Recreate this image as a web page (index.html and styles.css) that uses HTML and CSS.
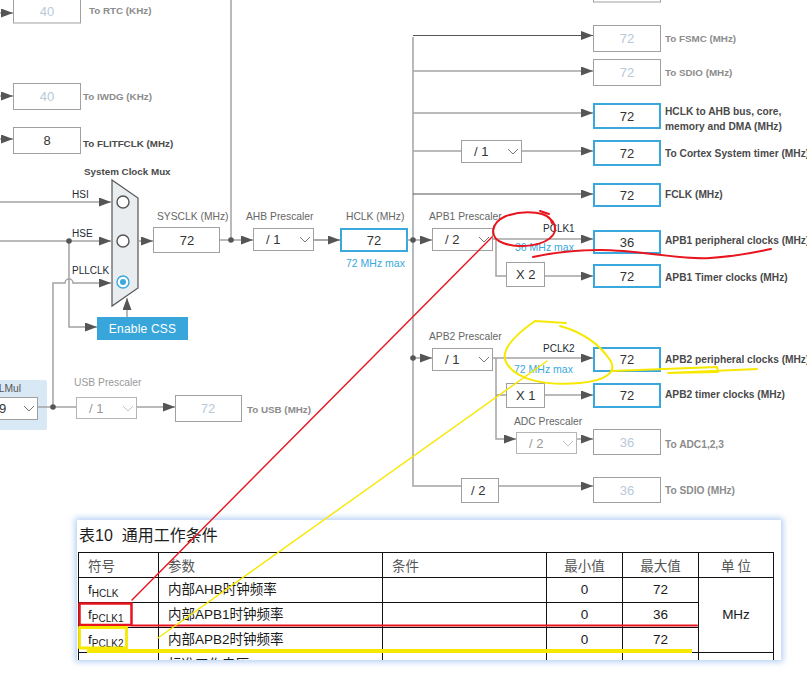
FILE: index.html
```html
<!DOCTYPE html>
<html lang="zh">
<head>
<meta charset="utf-8">
<title>Clock Configuration</title>
<link rel="stylesheet" href="styles.css">
</head>
<body>
<div class="page">
<svg class="diagram" width="807" height="520" viewBox="0 0 807 520">
  <defs>
    <marker id="ah" markerWidth="12" markerHeight="9" refX="12" refY="4.5" orient="auto" markerUnits="userSpaceOnUse">
      <path d="M0,0 L12,4.5 L0,9 Z" fill="#555"/>
    </marker>
  </defs>

  <!-- left top outputs -->
  <path class="w" d="M0,13 H13" marker-end="url(#ah)"/>
  <rect class="bx" x="13.5" y="-5.5" width="67" height="28.5"/>
  <text class="v vd" x="47" y="16">40</text>
  <text class="out outd" x="89" y="14">To RTC (KHz)</text>

  <path class="w" d="M0,96 H13" marker-end="url(#ah)"/>
  <rect class="bx" x="13.5" y="83.5" width="67" height="26"/>
  <text class="v vd" x="47" y="101">40</text>
  <text class="out outd" x="83" y="100">To IWDG (KHz)</text>

  <path class="w" d="M0,139 H13" marker-end="url(#ah)"/>
  <rect class="bx" x="13.5" y="127.5" width="67" height="26"/>
  <text class="v" x="47" y="145">8</text>
  <text class="out" x="83" y="147">To FLITFCLK (MHz)</text>

  <path class="w" d="M231,0 V240"/>

  <!-- system clock mux -->
  <text class="out" x="84" y="175">System Clock Mux</text>
  <path class="w" d="M0,202 H111" marker-end="url(#ah)"/>
  <text class="sig" x="72" y="198">HSI</text>
  <path class="w" d="M0,241 H111" marker-end="url(#ah)"/>
  <text class="sig" x="72" y="237">HSE</text>
  <path class="w" d="M69,241 V327 H97" marker-end="url(#ah)"/>
  <circle class="dot" cx="69" cy="241" r="2.8"/>
  <text class="sig" x="72" y="274">PLLCLK</text>
  <path class="w" d="M53,407 V283 H65 A4,4 0 0 1 73,283 H111" marker-end="url(#ah)"/>
  <polygon class="mux" points="112,180 138,198 138,288 112,306"/>
  <circle class="rb" cx="123" cy="202" r="6"/>
  <circle class="rb" cx="123" cy="241" r="6"/>
  <circle class="rb rbon" cx="123" cy="282" r="6"/>
  <circle class="rbdot" cx="123" cy="282" r="3"/>
  <rect class="css" x="97" y="317" width="91" height="23"/>
  <text class="csst" x="142.5" y="333">Enable CSS</text>
  <path class="w" d="M127,317 V298" marker-end="url(#ah)"/>

  <path class="w" d="M139,241 H153" marker-end="url(#ah)"/>
  <text class="pl" x="157" y="220">SYSCLK (MHz)</text>
  <rect class="bx" x="153.5" y="227.5" width="66" height="25"/>
  <text class="v" x="187" y="245">72</text>

  <path class="w" d="M220,240 H253" marker-end="url(#ah)"/>
  <circle class="dot" cx="231" cy="240" r="2.8"/>
  <text class="pl" x="246" y="220">AHB Prescaler</text>
  <rect class="bx" x="253.5" y="228.5" width="60" height="22"/>
  <text class="sel" x="266" y="244">/ 1</text>
  <polyline class="chev" points="300,237 305,242 310,237"/>
  <path class="wd" d="M314,240 H340" marker-end="url(#ah)"/>
  <text class="pl" x="346" y="220">HCLK (MHz)</text>
  <rect class="bxa" x="341" y="229" width="66" height="22"/>
  <text class="v" x="374" y="245">72</text>
  <text class="max" x="346" y="267">72 MHz max</text>

  <!-- HCLK distribution -->
  <path class="w" d="M413,37 V486 H461"/>
  <path class="w" d="M407,240 H432" marker-end="url(#ah)"/>
  <circle class="dot" cx="413" cy="240" r="2.8"/>

  <rect class="bx" x="593.5" y="-10.5" width="67" height="12.5"/>

  <path class="wd" d="M413,35.5 H593" marker-end="url(#ah)"/>
  <rect class="bx" x="593.5" y="25.5" width="67" height="26"/>
  <text class="v vd" x="627" y="43">72</text>
  <text class="out outd" x="665" y="42">To FSMC (MHz)</text>

  <path class="w" d="M413,71 H593" marker-end="url(#ah)"/>
  <rect class="bx" x="593.5" y="59.5" width="67" height="26"/>
  <text class="v vd" x="627" y="77">72</text>
  <text class="out outd" x="665" y="76">To SDIO (MHz)</text>

  <path class="w" d="M413,113 H593" marker-end="url(#ah)"/>
  <rect class="bxa" x="594" y="104" width="66" height="24"/>
  <text class="v" x="627" y="120.5">72</text>
  <text class="out outr" x="665" y="115">HCLK to AHB bus, core,</text>
  <text class="out outr" x="665" y="130">memory and DMA (MHz)</text>

  <path class="w" d="M413,151 H461"/>
  <rect class="bx" x="461.5" y="140.5" width="60" height="22"/>
  <text class="sel" x="474" y="156">/ 1</text>
  <polyline class="chev" points="508,149 513,154 518,149"/>
  <path class="w" d="M522,151 H593" marker-end="url(#ah)"/>
  <rect class="bxa" x="594" y="141" width="66" height="24"/>
  <text class="v" x="627" y="158">72</text>
  <text class="out outr" x="665" y="156.5">To Cortex System timer (MHz)</text>

  <path class="wd" d="M413,194 H593" marker-end="url(#ah)"/>
  <rect class="bxa" x="594" y="184" width="66" height="22"/>
  <text class="v" x="627" y="199.5">72</text>
  <text class="out outr" x="665" y="197.5">FCLK (MHz)</text>

  <!-- APB1 -->
  <text class="pl" x="429" y="220">APB1 Prescaler</text>
  <rect class="bx" x="432.5" y="228.5" width="60" height="22"/>
  <text class="sel" x="445" y="244">/ 2</text>
  <polyline class="chev" points="479,237 484,242 489,237"/>
  <path class="w" d="M493,239 H593" marker-end="url(#ah)"/>
  <text class="sig" x="543" y="232">PCLK1</text>
  <text class="max" x="515" y="251">36 MHz max</text>
  <rect class="bxa" x="594" y="231" width="66" height="22"/>
  <text class="v" x="627" y="246.5">36</text>
  <text class="out outr" x="665" y="243.5">APB1 peripheral clocks (MHz)</text>
  <path class="w" d="M496,239 V276 H506"/>
  <rect class="bx" x="506.5" y="262.5" width="38" height="24"/>
  <text class="sel" x="516" y="279">X 2</text>
  <path class="w" d="M545,276 H593" marker-end="url(#ah)"/>
  <rect class="bxa" x="594" y="265" width="66" height="22"/>
  <text class="v" x="627" y="280.5">72</text>
  <text class="out outr" x="665" y="280.5">APB1 Timer clocks (MHz)</text>

  <!-- APB2 -->
  <text class="pl" x="429" y="340">APB2 Prescaler</text>
  <path class="w" d="M413,358 H432" marker-end="url(#ah)"/>
  <circle class="dot" cx="413" cy="358" r="2.8"/>
  <rect class="bx" x="432.5" y="348.5" width="60" height="22"/>
  <text class="sel" x="445" y="364">/ 1</text>
  <polyline class="chev" points="479,357 484,362 489,357"/>
  <path class="w" d="M493,358 H593" marker-end="url(#ah)"/>
  <text class="sig" x="543" y="352">PCLK2</text>
  <text class="max" x="514" y="373">72 MHz max</text>
  <rect class="bxa" x="594" y="348" width="66" height="23"/>
  <text class="v" x="627" y="364">72</text>
  <text class="out outr" x="665" y="362.5">APB2 peripheral clocks (MHz)</text>
  <path class="w" d="M496,358 V439 H516" marker-end="url(#ah)"/>
  <path class="w" d="M496,395 H506"/>
  <rect class="bx" x="506.5" y="383.5" width="38" height="24"/>
  <text class="sel" x="516" y="400">X 1</text>
  <path class="w" d="M545,395 H593" marker-end="url(#ah)"/>
  <rect class="bxa" x="594" y="384" width="66" height="23"/>
  <text class="v" x="627" y="400">72</text>
  <text class="out outr" x="665" y="397.5">APB2 timer clocks (MHz)</text>

  <text class="pl" x="514" y="425">ADC Prescaler</text>
  <rect class="bx bxd" x="516.5" y="432.5" width="60" height="21"/>
  <text class="sel seld" x="529" y="448">/ 2</text>
  <polyline class="chev chevd" points="563,441 568,446 573,441"/>
  <path class="w" d="M577,439 H593" marker-end="url(#ah)"/>
  <rect class="bx" x="593.5" y="429.5" width="67" height="25"/>
  <text class="v vd" x="627" y="447">36</text>
  <text class="out outd outr" x="665" y="447.5">To ADC1,2,3</text>

  <rect class="bx" x="461.5" y="478.5" width="37" height="24"/>
  <text class="sel" x="471" y="495">/ 2</text>
  <path class="w" d="M499,486 H593" marker-end="url(#ah)"/>
  <rect class="bx" x="593.5" y="477.5" width="67" height="25"/>
  <text class="v vd" x="627" y="495">36</text>
  <text class="out outd outr" x="665" y="493.5">To SDIO (MHz)</text>

  <!-- PLL mul + USB -->
  <rect class="pllbg" x="-4" y="380" width="51" height="50" rx="2"/>
  <text class="pl pld" x="21" y="392" text-anchor="end">PLLMul</text>
  <rect class="bx" x="-10.5" y="397.5" width="48" height="22"/>
  <text class="sel" x="-1" y="413">9</text>
  <polyline class="chev" points="24,406 29,411 34,406"/>
  <path class="w" d="M38,407 H76"/>
  <circle class="dot" cx="53" cy="407" r="2.8"/>
  <text class="pl pllite" x="74" y="386">USB Prescaler</text>
  <rect class="bx bxd" x="76.5" y="397.5" width="60" height="21"/>
  <text class="sel seld" x="89" y="413">/ 1</text>
  <polyline class="chev chevd" points="123,406 128,411 133,406"/>
  <path class="w" d="M137,407 H175" marker-end="url(#ah)"/>
  <rect class="bx" x="175.5" y="395.5" width="66" height="26"/>
  <text class="v vd" x="208" y="413">72</text>
  <text class="out outd" x="247" y="413">To USB (MHz)</text>
</svg>

<div class="panel">
  <div class="caption"><span class="cap-num">表10</span><span class="cap-title">通用工作条件</span></div>
  <table class="spec">
    <colgroup>
      <col class="k1"><col class="k2"><col class="k3"><col class="k4"><col class="k5"><col class="k6">
    </colgroup>
    <tr class="head">
      <td class="sym">符号</td><td class="par">参数</td><td class="par">条件</td><td class="num">最小值</td><td class="num">最大值</td><td class="num">单 位</td>
    </tr>
    <tr>
      <td class="sym">f<sub>HCLK</sub></td><td class="par">内部AHB时钟频率</td><td></td><td class="num">0</td><td class="num">72</td><td class="num" rowspan="3">MHz</td>
    </tr>
    <tr>
      <td class="sym">f<sub>PCLK1</sub></td><td class="par">内部APB1时钟频率</td><td></td><td class="num">0</td><td class="num">36</td>
    </tr>
    <tr>
      <td class="sym">f<sub>PCLK2</sub></td><td class="par">内部APB2时钟频率</td><td></td><td class="num">0</td><td class="num">72</td>
    </tr>
    <tr>
      <td class="sym">V<sub>DD</sub></td><td class="par">标准工作电压</td><td></td><td class="num">2</td><td class="num">3.6</td><td class="num">V</td>
    </tr>
  </table>
</div>

<svg class="marks" width="807" height="674" viewBox="0 0 807 674">
  <g class="red">
    <path d="M540,211 L549,214 M552,223 C550,212 526,209 506,216 C490,223 489,238 503,243 C519,249 545,246 553,235 C557,229 555,222 548,217"/>
    <path d="M533,257 C556,252 580,250 600,250 C640,250 680,260 710,258 C740,256 760,251 771,249"/>
    <path class="thin" d="M492,237 L132,600"/>
    <rect x="79.5" y="603.5" width="52" height="21.5"/>
    <path d="M132,625.5 H697"/>
  </g>
  <g class="yel">
    <path d="M566,323 L535,321 C515,335 500,350 506,362 C515,380 545,386 580,383 C605,381 618,372 610,360 C600,345 585,333 560,326"/>
    <path d="M612,371 L717,367 L718,372 L668,373 M668,373 L757,369"/>
    <path class="thin" d="M547,361 L158,638"/>
    <rect class="thick" x="79.5" y="627.5" width="47" height="20.5"/>
    <path class="thick4" d="M87,651 H692"/>
  </g>
</svg>
</div>
</body>
</html>
```

FILE: styles.css
```css
html, body {
  margin: 0;
  padding: 0;
  background: #ffffff;
}
.page {
  position: relative;
  width: 807px;
  height: 674px;
  overflow: hidden;
  background: #ffffff;
}
.diagram {
  display: block;
  font-family: "Liberation Sans", Arial, sans-serif;
}
.w { fill: none; stroke: #a3a3a3; stroke-width: 1.5; }
.wd { fill: none; stroke: #555555; stroke-width: 1; }
.bx { fill: #ffffff; stroke: #a0a0a0; stroke-width: 1; }
.bxd { stroke: #b5b5b5; }
.bxa { fill: #ffffff; stroke: #3aa8dc; stroke-width: 2; }
.dot { fill: #555555; }
.v { font-size: 13px; fill: #333333; text-anchor: middle; }
.vd { fill: #b8c9da; }
.out { font-size: 9.8px; font-weight: bold; fill: #4a4a4a; }
.outr { font-size: 10.2px; }
.outd { fill: #8c8c8c; }
.sig { font-size: 10px; fill: #222a33; }
.pl { font-size: 10.3px; fill: #666666; }
.pld { fill: #555555; }
.pllite { fill: #9a9a9a; }
.max { font-size: 10.5px; fill: #3aa8dc; }
.sel { font-size: 13px; fill: #333333; }
.seld { fill: #9a9a9a; }
.chev { fill: none; stroke: #777777; stroke-width: 1; }
.chevd { stroke: #c4c4c4; }
.mux { fill: #e9edf0; stroke: #555555; stroke-width: 1.2; }
.rb { fill: #ffffff; stroke: #555555; stroke-width: 1.4; }
.rbon { stroke: #3aa8dc; }
.rbdot { fill: #3aa8dc; }
.css { fill: #38a6da; }
.csst { font-size: 12px; fill: #ffffff; text-anchor: middle; letter-spacing: 0.2px; }
.pllbg { fill: #d9e8f5; }

.panel {
  margin-left: 77px;
  width: 704px;
  height: 140px;
  background: #ffffff;
  box-shadow: 0 0 6px 2px rgba(130, 175, 235, 0.6);
  overflow: hidden;
  font-family: "Liberation Sans", "Noto Sans CJK SC", sans-serif;
}
.caption {
  height: 32px;
  padding-left: 2px;
  font-size: 16px;
  line-height: 32px;
  color: #1e1e1e;
  font-family: "Liberation Sans", "Noto Sans CJK SC", sans-serif;
  white-space: nowrap;
}
.cap-title { margin-left: 9px; }
.spec {
  margin-left: 1px;
  border-collapse: collapse;
  table-layout: fixed;
  width: 695px;
  font-size: 13.5px;
  color: #1a1a1a;
}
.k1 { width: 80px; }
.k2 { width: 224px; }
.k3 { width: 164px; }
.k4 { width: 76px; }
.k5 { width: 76px; }
.k6 { width: 75px; }
.spec td {
  border: 1px solid #111111;
  height: 24px;
  padding: 0;
  line-height: 16px;
  white-space: nowrap;
  overflow: hidden;
}
.spec .head td {
  color: #555555;
  font-family: "Noto Sans CJK SC", sans-serif;
  font-size: 13.5px;
}
.spec .sym { padding-left: 9px; }
.spec .par { padding-left: 9px; }
.spec .num { text-align: center; }
.spec sub {
  font-size: 10px;
  vertical-align: -3px;
  line-height: 0;
}

.marks {
  position: absolute;
  left: 0;
  top: 0;
  pointer-events: none;
}
.red path, .red rect { fill: none; stroke: #e8141e; stroke-width: 2; stroke-linecap: round; stroke-linejoin: round; }
.red rect { stroke-width: 2.5; stroke-linecap: butt; }
.red .thin, .yel .thin { stroke-width: 1.4; }
.yel path, .yel rect { fill: none; stroke: #f7e800; stroke-width: 2; stroke-linecap: round; stroke-linejoin: round; }
.yel .thick { stroke-width: 2.8; stroke-linecap: butt; }
.yel .thick4 { stroke-width: 4; stroke-linecap: butt; }
```
